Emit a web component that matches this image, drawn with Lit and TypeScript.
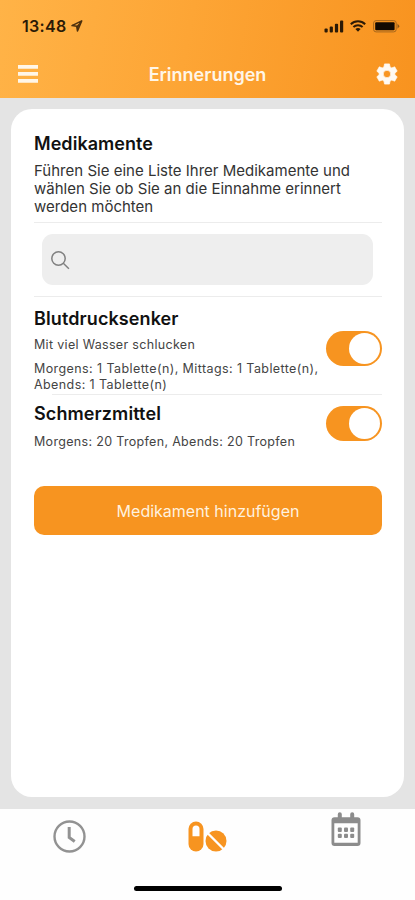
import { LitElement, html, css, nothing } from "lit";
import { customElement } from "lit/decorators.js";

interface Medication {
  name: string;
  note?: string;
  schedule: string[];
  on: boolean;
}

const medications: Medication[] = [
  {
    name: "Blutdrucksenker",
    note: "Mit viel Wasser schlucken",
    schedule: ["Morgens: 1 Tablette(n), Mittags: 1 Tablette(n),", "Abends: 1 Tablette(n)"],
    on: true,
  },
  { name: "Schmerzmittel", schedule: ["Morgens: 20 Tropfen, Abends: 20 Tropfen"], on: true },
];

@customElement("app-header")
class AppHeader extends LitElement {
  static styles = css`
    :host { display: block; height: 98px; background: linear-gradient(100deg, #ffb347 0%, #fda535 45%, #f8931f 100%); }
    .status { height: 50px; display: flex; align-items: center; padding: 2px 15px 0 22px; box-sizing: border-box; color: #2b1a06; }
    .time { font-size: 16px; font-weight: 600; letter-spacing: 0.3px; width: 49px; }
    .signal { margin-left: auto; margin-right: 6px; }
    .wifi { margin-right: 7px; }
    .bar { height: 48px; display: flex; align-items: center; justify-content: space-between; padding: 0 17px 0 18px; }
    .title { color: #fff6e8; font-size: 18px; font-weight: 600; padding-left: 1px; }
    svg { display: block; flex: none; }
  `;
  render() {
    return html`
      <div class="status">
        <span class="time">13:48</span>
        <svg width="12" height="12" viewBox="0 0 12 12"><path d="M1 5.6 10.7 .9 6.5 11 5.7 6.3Z" fill="none" stroke="#4d300d" stroke-width="1.5" stroke-linejoin="round"/><path d="M10.5 1 6.3 10 5.8 5.8Z" fill="#4d300d"/></svg>
        <svg class="signal" width="20" height="13" viewBox="0 0 20 13" fill="#2b1a06"><rect x="0.5" y="8.5" width="3.2" height="4" rx="1"/><rect x="5.7" y="6.5" width="3.2" height="6" rx="1"/><rect x="10.9" y="3.8" width="3.2" height="8.7" rx="1"/><rect x="16" y="0.5" width="3.2" height="12" rx="1"/></svg>
        <svg class="wifi" width="16" height="12" viewBox="0 0 16 12" fill="none" stroke="#2b1a06" stroke-width="2"><path d="M.8 4.2a10.4 10.4 0 0 1 14.4 0M3.4 7a6.7 6.7 0 0 1 9.2 0"/><path d="M5.4 9a4 4 0 0 1 5.2 0L8 11.7Z" fill="#2b1a06" stroke="none"/></svg>
        <svg width="27" height="13" viewBox="0 0 27 13"><rect x=".6" y=".6" width="22.6" height="11.3" rx="2.5" fill="none" stroke="#a7671c" stroke-width="1"/><rect x="2.2" y="2.2" width="19.4" height="8.1" rx="1" fill="#120a02"/><path d="M24.5 3.6 26.6 6.2 24.5 8.8Z" fill="#8a5516"/></svg>
      </div>
      <div class="bar">
        <svg width="20" height="18" viewBox="0 0 20 18" fill="#fff6e8"><path d="M0 0h20v3.8H0zM0 7h20v3.8H0zM0 14h20v3.8H0z"/></svg>
        <span class="title">Erinnerungen</span>
        <svg width="22" height="22" viewBox="0 0 24 24"><path fill="#fffaf3" stroke="#fffaf3" stroke-width=".8" stroke-linejoin="round" fill-rule="evenodd" d="M9.3 1h5.4l.6 3.3 1.9 1.1L20.4 4.2 23.1 8.9 20.6 11v2l2.5 2.1-2.7 4.7-3.2-1.2-1.9 1.1-.6 3.3H9.3l-.6-3.3-1.9-1.1-3.2 1.2L.9 15.1 3.4 13v-2L.9 8.9 3.6 4.2l3.2 1.2 1.9-1.1ZM12 7.9a4.1 4.1 0 1 0 0 8.2 4.1 4.1 0 0 0 0-8.2Z"/></svg>
      </div>
    `;
  }
}

@customElement("toggle-switch")
class ToggleSwitch extends LitElement {
  static properties = { on: { type: Boolean } };
  declare on: boolean;
  static styles = css`
    :host { display: block; flex: none; }
    .track { width: 56px; height: 35px; box-sizing: border-box; padding: 2px; border-radius: 18px; background: #ccc; display: flex; }
    .track.on { background: #f79420; justify-content: flex-end; }
    .knob { width: 31px; height: 31px; border-radius: 50%; background: #fff; }
  `;
  render() {
    return html`<div class="track ${this.on ? "on" : ""}"><div class="knob"></div></div>`;
  }
}

@customElement("medication-row")
class MedicationRow extends LitElement {
  static properties = { item: { attribute: false } };
  declare item: Medication;
  static styles = css`
    :host { display: flex; justify-content: space-between; }
    .info { white-space: nowrap; width: 291px; }
    .name { font-size: 18px; font-weight: 600; line-height: 24px; letter-spacing: 0.1px; color: #111; }
    .note, .schedule { font-size: 12.5px; color: #444; line-height: 15.5px; letter-spacing: 0.32px; }
    .note { margin-top: 6px; }
    .schedule { margin-top: 8.5px; letter-spacing: 0.41px; }
    .name + .schedule { margin-top: 8px; letter-spacing: 0.32px; }
    toggle-switch { margin-top: 24px; }
    toggle-switch.compact { margin-top: 4px; }
  `;
  render() {
    const m = this.item;
    return html`
      <div class="info">
        <div class="name">${m.name}</div>
        ${m.note ? html`<div class="note">${m.note}</div>` : nothing}
        <div class="schedule">${m.schedule.map((s) => html`<div>${s}</div>`)}</div>
      </div>
      <toggle-switch class=${m.note ? "" : "compact"} .on=${m.on}></toggle-switch>
    `;
  }
}

@customElement("tab-bar")
class TabBar extends LitElement {
  static styles = css`
    :host { display: flex; flex-direction: column; align-items: center; height: 91px; background: #fefefe; }
    .tabs { width: 100%; height: 77px; display: grid; grid-template-columns: 1fr 1fr 1fr; justify-items: center; }
    .home { width: 148px; height: 5px; border-radius: 3px; background: #000; }
    svg { display: block; }
    .clock { margin-top: 11px; }
    .pills { margin-top: 12px; }
    .calendar { margin-top: 3px; }
  `;
  render() {
    return html`
      <div class="tabs">
        <svg class="clock" width="33" height="33" viewBox="0 0 33 33" fill="none" stroke="#929292"><circle cx="16.5" cy="16.5" r="15" stroke-width="2.4"/><path d="M16.2 7v10.5l5.5 4" stroke-width="3"/></svg>
        <svg class="pills" width="39" height="31" viewBox="0 0 39 31"><rect x="0.5" y="0.5" width="15" height="30" rx="7.5" fill="#f79420"/><path d="M4.5 15.2V8a3.5 3.5 0 0 1 7 0v7.2Z" fill="#fff"/><circle cx="28" cy="20" r="10.5" fill="#f79420"/><path d="m19 11.5 17.5 17.5" stroke="#fff" stroke-width="2.4"/></svg>
        <svg class="calendar" width="30" height="34" viewBox="0 0 30 34" fill="#8c8c8c"><path fill-rule="evenodd" d="M3.5 5.2h23A3 3 0 0 1 29.5 8.2V31a3 3 0 0 1-3 3h-23a3 3 0 0 1-3-3V8.2a3 3 0 0 1 3-3ZM3.3 11.3V30.8h23.4V11.3Z"/><path d="M6.8 2.2a2 2 0 0 1 4 0V7h-4zM19.2 2.2a2 2 0 0 1 4 0V7h-4z"/><rect x="6.8" y="15.5" width="4" height="4.4" rx="1"/><rect x="13" y="15.5" width="4" height="4.4" rx="1"/><rect x="19.2" y="15.5" width="4" height="4.4" rx="1"/><rect x="6.8" y="21.7" width="4" height="4.4" rx="1"/><rect x="13" y="21.7" width="4" height="4.4" rx="1"/><rect x="19.2" y="21.7" width="4" height="4.4" rx="1"/></svg>
      </div>
      <div class="home"></div>
    `;
  }
}

@customElement("app-root")
class AppRoot extends LitElement {
  static styles = css`
    :host { display: flex; flex-direction: column; width: 415px; height: 900px; overflow: hidden; background: #e4e4e4; font-family: Inter, sans-serif; }
    .main { flex: 1; padding: 11px 11px 12px; box-sizing: border-box; display: flex; }
    .card { flex: 1; box-sizing: border-box; background: #fff; border-radius: 21px; padding: 22px 22px 0 23px; }
    .heading { font-size: 18px; font-weight: 600; line-height: 25px; letter-spacing: 0.05px; color: #111; }
    .intro { margin-top: 5.5px; height: 61.5px; font-size: 15px; line-height: 18.3px; letter-spacing: 0.01px; color: #333; white-space: nowrap; border-bottom: 1px solid #ececec; box-sizing: border-box; }
    .search { margin: 11px 9px 11px 8px; height: 51px; border-radius: 11px; background: #eeeeee; display: flex; align-items: center; padding: 1px 0 0 9px; box-sizing: border-box; }
    .rule { height: 1px; background: #ececec; }
    .rule.inset { margin-left: 18px; }
    .first { height: 87px; margin-top: 10px; }
    .second { height: 84px; margin-top: 7px; }
    .add { display: block; width: 100%; height: 49px; border: 0; padding: 1px 0 0; border-radius: 10px; background: #f79420; color: #fff1df; font: 400 16px/48px Inter, sans-serif; text-align: center; }
  `;
  render() {
    return html`
      <app-header></app-header>
      <div class="main">
        <div class="card">
          <div class="heading">Medikamente</div>
          <div class="intro">
            <div>Führen Sie eine Liste Ihrer Medikamente und</div>
            <div>wählen Sie ob Sie an die Einnahme erinnert</div>
            <div>werden möchten</div>
          </div>
          <div class="search">
            <svg width="19" height="19" viewBox="0 0 19 19" fill="none" stroke="#808080" stroke-width="1.5"><circle cx="7.5" cy="7.5" r="6.7"/><path d="m12.3 12.3 5.6 5.4"/></svg>
          </div>
          <div class="rule"></div>
          <medication-row class="first" .item=${medications[0]}></medication-row>
          <div class="rule inset"></div>
          <medication-row class="second" .item=${medications[1]}></medication-row>
          <button class="add">Medikament hinzufügen</button>
        </div>
      </div>
      <tab-bar></tab-bar>
    `;
  }
}
